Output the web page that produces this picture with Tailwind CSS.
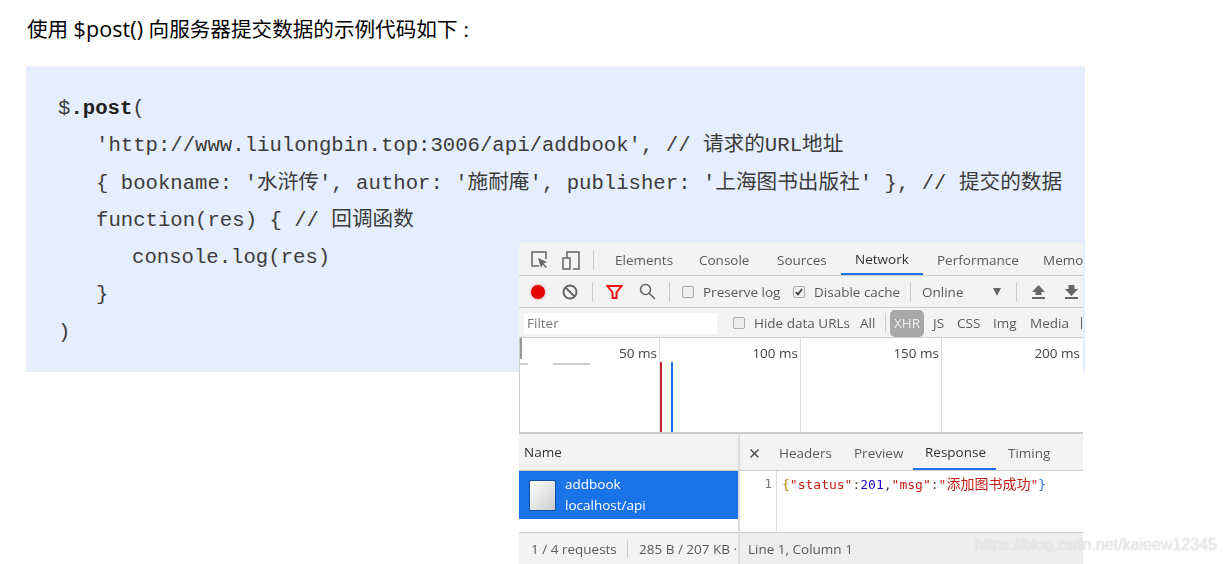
<!DOCTYPE html>
<html lang="zh-CN">

<head>
    <meta charset="UTF-8">
    <title>$.post</title>
    <script src="https://cdn.jsdelivr.net/npm/@tailwindcss/browser@4"></script>
</head>

<body class="relative h-[564px] overflow-hidden bg-white font-['Open_Sans','Noto_Sans_CJK_SC',sans-serif]">
    <!-- Article -->
    <p class="pl-[27px] pt-[15px] text-[20.600px] leading-[28px] text-black">使用 <span class="text-[21.500px] tracking-[0.1px]">$post()</span> 向服务器提交数据的示例代码如下<span class="ml-[6px]">:</span></p>

    <pre class="mt-[23px] ml-[26px] h-[306px] w-[1059px] bg-[#e4eefd] pl-[32px] pt-[24px] font-['Liberation_Mono','Noto_Sans_CJK_SC',monospace] text-[20.650px] leading-[37.3px] text-[#3c3c3c]"><div class="h-[37.3px]">$<b class="text-[#222]">.post</b>(</div><div class="ml-[38px] h-[37.3px]">'http://www.liulongbin.top:3006/api/addbook', // 请求的URL地址</div><div class="ml-[38px] h-[37.3px]">{ bookname: '水浒传', author: '施耐庵', publisher: '上海图书出版社' }, // 提交的数据</div><div class="ml-[38px] h-[37.3px]">function(res) { // 回调函数</div><div class="ml-[74px] h-[37.3px]">console.log(res)</div><div class="ml-[38px] h-[37.3px]">}</div><div class="h-[37.3px]">)</div></pre>

    <!-- DevTools screenshot pasted over the code block -->
    <div class="absolute left-[519px] top-[243px] flex h-[321px] w-[564px] flex-col overflow-hidden bg-white text-[13.500px] leading-[20px] text-[#5a5a5a] blur-[0.35px] font-['Open_Sans','Noto_Sans_CJK_SC',sans-serif]">
        <!-- Tabs -->
        <div class="flex h-[33px] shrink-0 items-center border-b border-[#ccc] bg-[#f3f3f3] pt-px [&>*]:shrink-0">
            <svg class="ml-[11px] h-[20px] w-[20px]" viewBox="0 0 20 20" fill="none" stroke="#666" stroke-width="1.5">
                <path d="M9 16H2V2h14v7" />
                <path d="M8 8l9 4-3.5 1.5L17 17l-1 1-3.5-3.5L11 18z" fill="#666" stroke="none" />
            </svg>
            <svg class="ml-[11px] h-[20px] w-[20px]" viewBox="0 0 20 20" fill="none" stroke="#666" stroke-width="1.5">
                <path d="M6 8V2h12v17h-6" />
                <rect x="2" y="8" width="7" height="11" />
            </svg>
            <div class="ml-[12px] mr-[7px] h-[20px] w-px bg-[#ccc]"></div>
            <div class="flex h-full items-center whitespace-nowrap [&>*]:shrink-0">
                <span class="w-[84px] pl-[14px]">Elements</span>
                <span class="w-[78px] pl-[14px]">Console</span>
                <span class="w-[78px] pl-[14px]">Sources</span>
                <span class="flex h-full w-[82px] items-center border-b-2 border-[#1a73e8] pl-[14px] text-[#333]">Network</span>
                <span class="w-[106px] pl-[14px]">Performance</span>
                <span class="pl-[14px]">Memo</span>
            </div>
        </div>

        <!-- Network toolbar -->
        <div class="flex h-[32px] shrink-0 items-center border-b border-[#ccc] bg-[#f3f3f3] whitespace-nowrap [&>*]:shrink-0">
            <div class="ml-[12px] h-[14px] w-[14px] rounded-full bg-[#e60000] shadow-[0_0_3px_#e88]"></div>
            <svg class="ml-[17px] h-[16px] w-[16px]" viewBox="0 0 16 16" fill="none" stroke="#666" stroke-width="2">
                <circle cx="8" cy="8" r="6.5" />
                <path d="M3.5 3.5l9 9" />
            </svg>
            <div class="ml-[14px] h-[20px] w-px bg-[#ccc]"></div>
            <svg class="ml-[13px] h-[16px] w-[17px]" viewBox="0 0 17 16" fill="none" stroke="#e11" stroke-width="2">
                <path d="M1.5 2h14L10.5 8.5V14h-4V8.5z" />
            </svg>
            <svg class="ml-[16px] h-[17px] w-[17px]" viewBox="0 0 17 17" fill="none" stroke="#666" stroke-width="1.6">
                <circle cx="6.5" cy="6.5" r="5" />
                <path d="M10 10l6 6" />
            </svg>
            <div class="ml-[13px] h-[20px] w-px bg-[#ccc]"></div>
            <span class="ml-[12px] h-[12px] w-[12px] rounded-[2px] border border-[#aaa] bg-[#eee]"></span>
            <span class="ml-[9px] w-[90px]">Preserve log</span>
            <span class="flex h-[12px] w-[12px] items-center justify-center rounded-[2px] border border-[#aaa] bg-[#eee]">
                <svg class="h-[8px] w-[8px]" viewBox="0 0 8 8" fill="none" stroke="#333" stroke-width="1.6">
                    <path d="M1 4l2 2.5L7 1" />
                </svg>
            </span>
            <span class="ml-[9px] w-[96px]">Disable cache</span>
            <div class="h-[20px] w-px bg-[#ccc]"></div>
            <span class="ml-[11px] w-[70px]">Online</span>
            <svg class="h-[8px] w-[10px]" viewBox="0 0 10 8" fill="#666">
                <path d="M1 0h8L5 8z" />
            </svg>
            <div class="ml-[14px] h-[20px] w-px bg-[#ccc]"></div>
            <svg class="ml-[14px] h-[15px] w-[15px]" viewBox="0 0 15 15" fill="#666">
                <path d="M7.5 1L14 8h-3.5v3h-6V8H1zM1 13h13v2H1z" />
            </svg>
            <svg class="ml-[18px] h-[15px] w-[15px]" viewBox="0 0 15 15" fill="#666">
                <path d="M4.500 1h6v4H14l-6.500 7L1 5h3.500zM1 13h13v2H1z" />
            </svg>
        </div>

        <!-- Filter bar -->
        <div class="flex h-[30px] shrink-0 items-center border-b border-[#ccc] bg-[#f3f3f3] pt-px whitespace-nowrap [&>*]:shrink-0">
            <div class="ml-[5px] flex h-[21px] w-[193px] items-center bg-white pl-[3px] text-[#777]">Filter</div>
            <span class="ml-[16px] h-[12px] w-[12px] rounded-[2px] border border-[#aaa] bg-[#eee]"></span>
            <span class="ml-[9px] w-[106px]">Hide data URLs</span>
            <span class="w-[25px]">All</span>
            <div class="h-[20px] w-px bg-[#ccc]"></div>
            <span class="ml-[4px] flex h-[27px] w-[34px] items-center justify-center rounded-[5px] bg-[#a8a8a8] text-[#eee]">XHR</span>
            <span class="ml-[9px] w-[24px]">JS</span>
            <span class="w-[36px]">CSS</span>
            <span class="w-[37px]">Img</span>
            <span class="w-[51px]">Media</span>
            <div class="h-[12px] w-px bg-[#5a5a5a]"></div>
        </div>

        <!-- Timeline -->
        <div class="relative flex h-[96px] shrink-0 border-b-2 border-l border-[#ccc] text-[#444]">
            <div class="h-full w-[140px] border-r border-[#ddd] pr-[2px] pt-[5px] text-right">50 ms</div>
            <div class="h-full w-[141px] border-r border-[#ddd] pr-[2px] pt-[5px] text-right">100 ms</div>
            <div class="h-full w-[141px] border-r border-[#ddd] pr-[2px] pt-[5px] text-right">150 ms</div>
            <div class="h-full w-[141px] pr-[3px] pt-[5px] text-right">200 ms</div>
            <div class="absolute left-0 top-0 h-[21px] w-[2px] bg-[#999]"></div>
            <div class="absolute left-0 top-[25px] h-[2px] w-[8px] bg-[#ccc]"></div>
            <div class="absolute left-[33px] top-[25px] h-[2px] w-[37px] bg-[#ccc]"></div>
            <div class="absolute bottom-0 left-[140px] top-[24px] w-[1.5px] bg-[#c0282d]"></div>
            <div class="absolute bottom-0 left-[151px] top-[24px] w-[1.5px] bg-[#1a73e8]"></div>
        </div>

        <!-- Requests and response -->
        <div class="flex min-h-0 flex-1">
            <div class="flex w-[221px] shrink-0 flex-col border-r-2 border-[#ddd]">
                <div class="flex h-[37px] shrink-0 items-center border-b border-[#ccc] bg-[#f3f3f3] pl-[5px] text-[#333]">Name</div>
                <div class="flex h-[48px] shrink-0 items-center bg-[#1a73e8] pl-[10px] text-white">
                    <div class="h-[31px] w-[27px] rounded-[2px] border border-[#14509f] bg-gradient-to-br from-white to-[#ccc]"></div>
                    <div class="ml-[9px] leading-[21px]">
                        <div>addbook</div>
                        <div>localhost/api</div>
                    </div>
                </div>
                <div class="flex-1"></div>
                <div class="flex h-[32px] shrink-0 items-center overflow-hidden whitespace-nowrap border-t border-[#ccc] bg-[#f3f3f3] pl-[12px] [&>*]:shrink-0">
                    <span class="w-[96px]">1 / 4 requests</span>
                    <div class="h-[18px] w-px bg-[#ccc]"></div>
                    <span class="ml-[11px]">285 B / 207 KB ·</span>
                </div>
            </div>
            <div class="flex min-w-0 flex-1 flex-col">
                <div class="flex h-[37px] shrink-0 items-center border-b border-[#ccc] bg-[#f3f3f3] pt-[2px] whitespace-nowrap [&>*]:shrink-0">
                    <svg class="ml-[10px] h-[9px] w-[9px]" viewBox="0 0 9 9" stroke="#555" stroke-width="1.5">
                        <path d="M.5.5l8 8M8.500.5l-8 8" />
                    </svg>
                    <span class="w-[95px] pl-[20px]">Headers</span>
                    <span class="w-[59px]">Preview</span>
                    <span class="flex h-full w-[83px] items-center border-b-2 border-[#1a73e8] pl-[12px] text-[#333]">Response</span>
                    <span class="ml-[12px]">Timing</span>
                </div>
                <div class="flex flex-1 font-['DejaVu_Sans_Mono','Noto_Sans_CJK_SC',monospace] text-[13px]">
                    <div class="w-[37px] shrink-0 border-r border-[#ddd] pr-[4px] pt-[3px] text-right text-[#777]">1</div>
                    <div class="whitespace-nowrap pl-[5px] pt-[3px]"><span class="text-[#b8860b]">{</span><span class="text-[#c41a16]">"status"</span><span class="text-[#444]">:</span><span class="text-[#1c00cf]">201</span><span class="text-[#444]">,</span><span class="text-[#c41a16]">"msg"</span><span class="text-[#444]">:</span><span class="text-[#c41a16]">"<span class="text-[14px]">添加图书成功</span>"</span><span class="text-[#27c]">}</span></div>
                </div>
                <div class="flex h-[32px] shrink-0 items-center border-t border-[#ccc] bg-[#eee] pl-[8px]">Line 1, Column 1</div>
            </div>
        </div>
    </div>

    <!-- Watermark -->
    <span class="absolute left-[975px] top-[535px] whitespace-nowrap font-['Liberation_Sans',sans-serif] text-[16px] leading-[20px] text-white/70 [text-shadow:0_0_1px_#bbb]">https://blog.csdn.net/kaieew12345</span>
</body>

</html>
